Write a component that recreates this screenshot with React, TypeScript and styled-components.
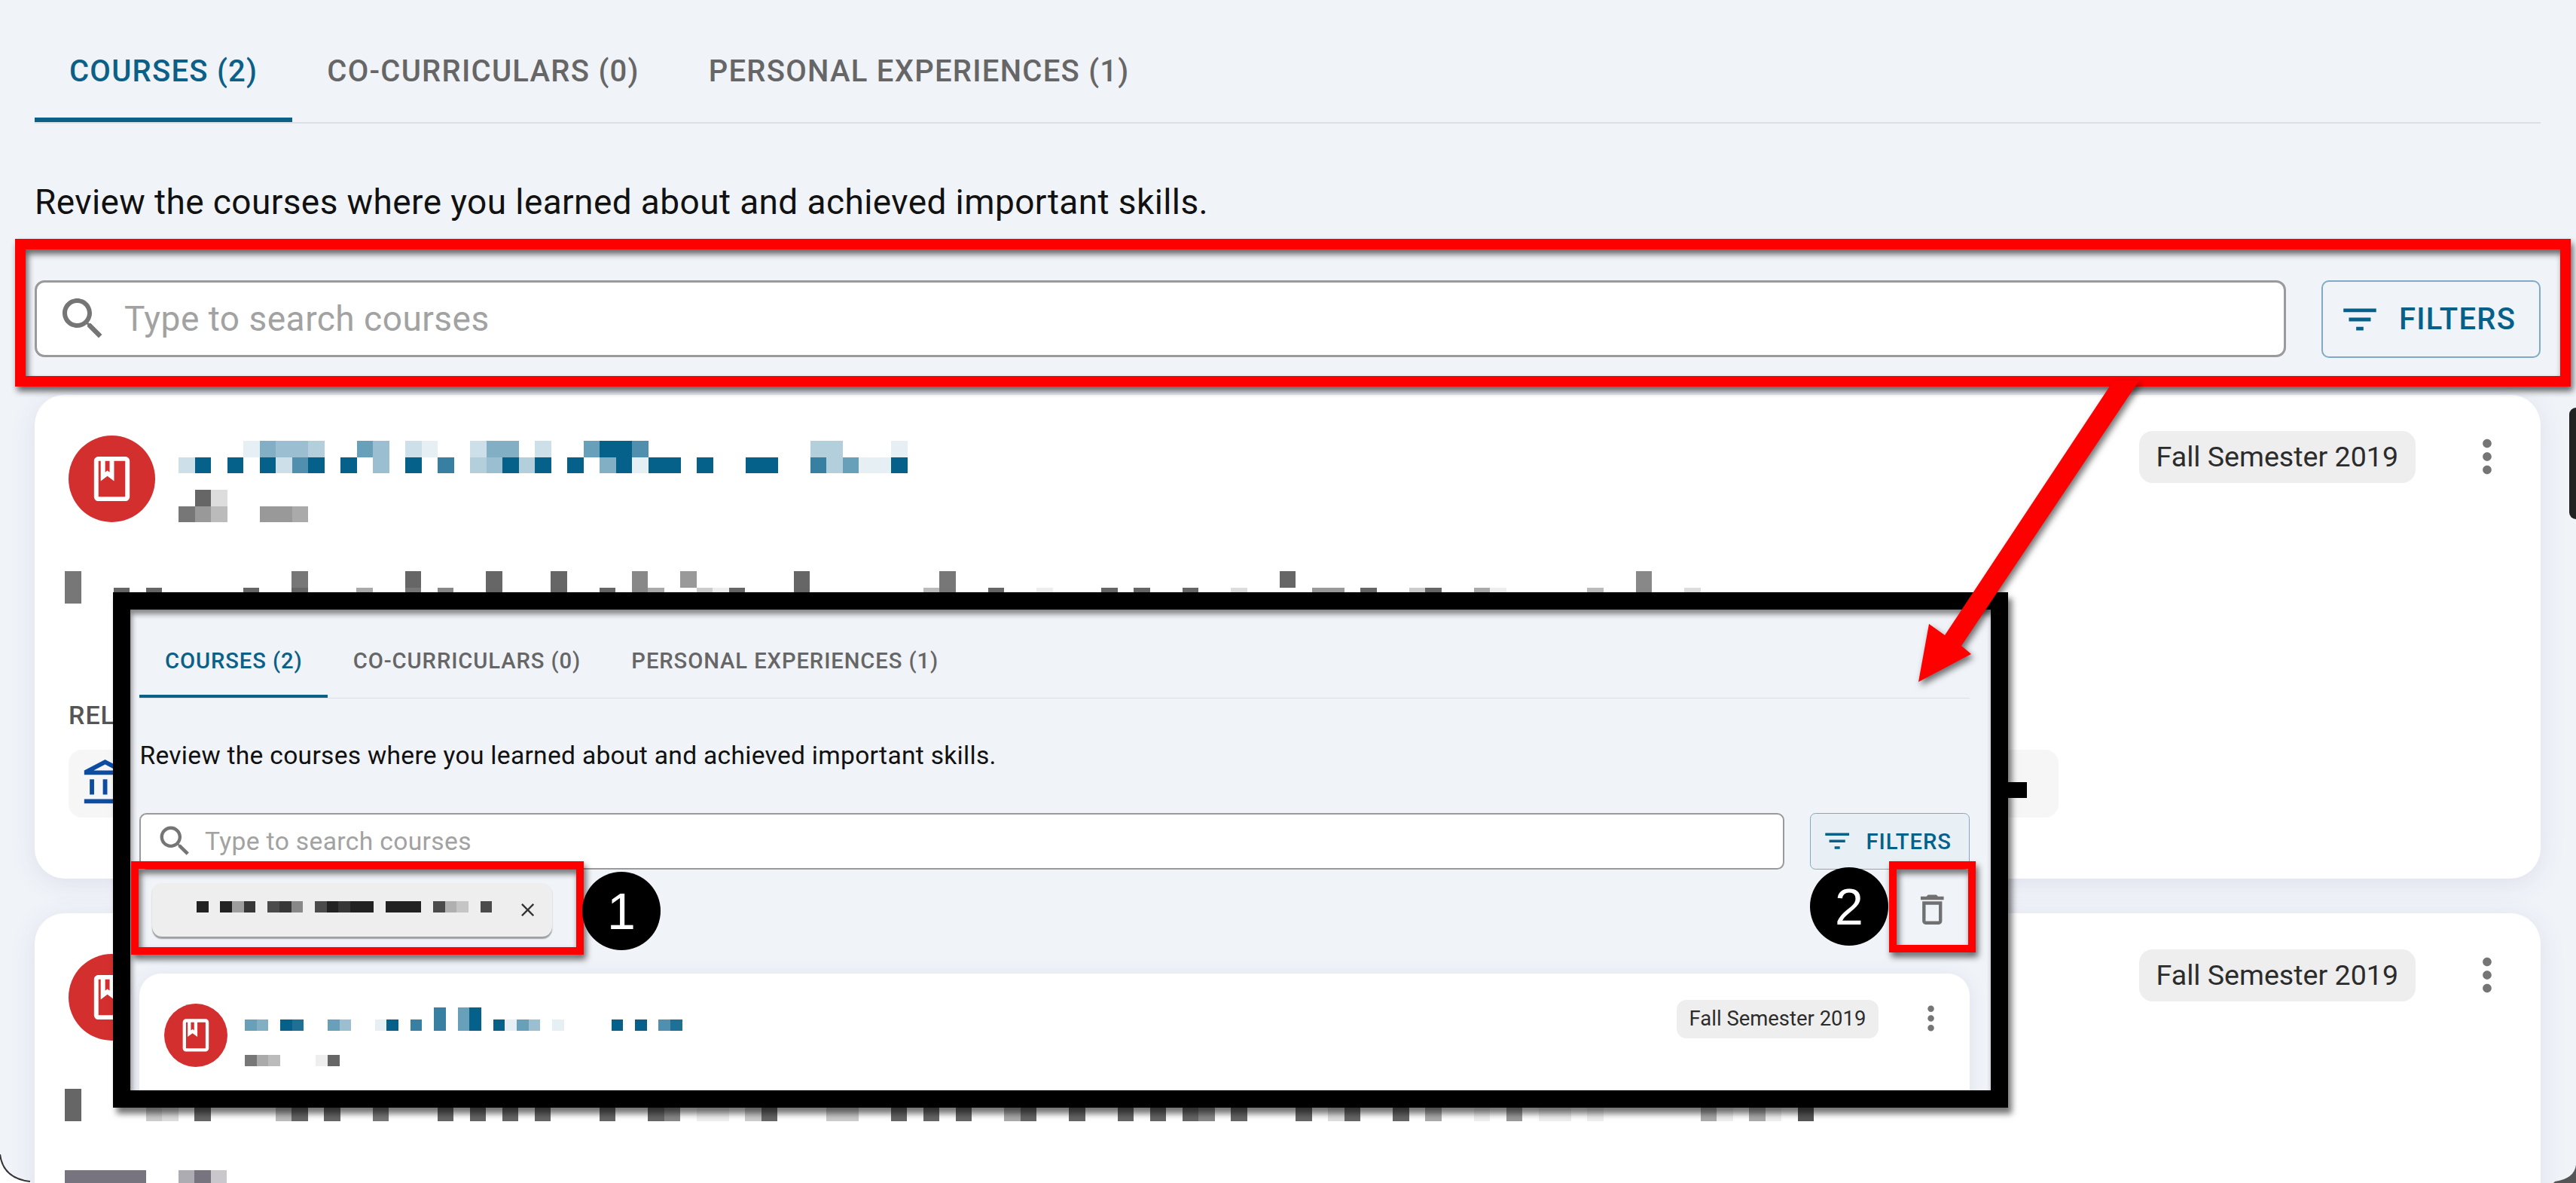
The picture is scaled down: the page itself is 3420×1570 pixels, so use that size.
import React, { FC, ReactNode } from "react";
import styled, { createGlobalStyle } from "styled-components";

const CELL = 21.5;
const BRAND = "#05608a";
const GREY = "#555555";

// rows are "column:level" pairs, level 1-9 is the opacity in tenths and f is solid
const Mosaic: FC<{ rows: string[]; color: string; cols: number }> = ({ rows, color, cols }) => (
	<svg width={cols * CELL} height={rows.length * CELL} style={{ display: "block" }} shapeRendering="crispEdges">
		{rows.map((row, y) =>
			row
				.split(" ")
				.filter(Boolean)
				.map((pair) => {
					const [col, level] = pair.split(":");
					return (
						<rect
							key={`${y}-${col}`}
							x={Number(col) * CELL}
							y={y * CELL}
							width={CELL}
							height={CELL}
							fill={color}
							opacity={level === "f" ? 1 : Number(level) / 10}
						/>
					);
				})
		)}
	</svg>
);

const SearchIcon = () => (
	<svg width="72" height="72" viewBox="0 0 24 24" fill="#757575">
		<path d="M15.5 14h-.79l-.28-.27C15.41 12.59 16 11.11 16 9.5 16 5.91 13.09 3 9.5 3S3 5.91 3 9.5 5.91 16 9.5 16c1.61 0 3.09-.59 4.23-1.57l.27.28v.79l5 4.99L20.49 19l-4.99-5zm-6 0C7.01 14 5 11.99 5 9.5S7.01 5 9.5 5 14 7.01 14 9.5 11.99 14 9.5 14z" />
	</svg>
);

const FilterIcon = () => (
	<svg width="58" height="58" viewBox="0 0 24 24" fill={BRAND}>
		<path d="M10 18h4v-2h-4v2zM3 6v2h18V6H3zm3 7h12v-2H6v2z" />
	</svg>
);

const MoreIcon = () => (
	<MoreButton>
		<svg width="70" height="70" viewBox="0 0 24 24" fill="#757575">
			<path d="M12 8c1.1 0 2-.9 2-2s-.9-2-2-2-2 .9-2 2 .9 2 2 2zm0 2c-1.1 0-2 .9-2 2s.9 2 2 2 2-.9 2-2-.9-2-2-2zm0 6c-1.1 0-2 .9-2 2s.9 2 2 2 2-.9 2-2-.9-2-2-2z" />
		</svg>
	</MoreButton>
);

const BookIcon = () => (
	<svg width="71" height="71" viewBox="0 0 24 24" fill="#fff">
		<path d="M18 2H6c-1.1 0-2 .9-2 2v16c0 1.1.9 2 2 2h12c1.1 0 2-.9 2-2V4c0-1.1-.9-2-2-2zM9 4h2v5l-1-.75L9 9V4zm9 16H6V4h1v9l3-2.25L13 13V4h5v16z" />
	</svg>
);

const BankIcon = () => (
	<svg width="70" height="70" viewBox="0 0 24 24" fill="#0c4da2">
		<path d="M6.5 10h-2v7h2v-7zm6 0h-2v7h2v-7zm8.5 9H2v2h19v-2zm-2.5-9h-2v7h2v-7zm-7-6.74L16.71 6H6.29l5.21-2.74m0-2.26L2 6v2h19V6l-9.5-5z" />
	</svg>
);

const TrashIcon = () => (
	<svg width="72" height="72" viewBox="0 0 24 24" fill="#707070">
		<path d="M6 19c0 1.1.9 2 2 2h8c1.1 0 2-.9 2-2V7H6v12zM8 9h8v10H8V9zm7.5-5l-1-1h-5l-1 1H5v2h14V4z" />
	</svg>
);

const CloseIcon = () => (
	<svg width="40" height="40" viewBox="0 0 24 24" fill="#333">
		<path d="M19 6.41 17.59 5 12 10.59 6.41 5 5 6.41 10.59 12 5 17.59 6.41 19 12 13.41 17.59 19 19 17.59 13.41 12z" />
	</svg>
);

const Toolbar: FC<{ $tinted?: boolean }> = ({ $tinted }) => (
	<SearchRow>
		<SearchField>
			<SearchIcon />
			<SearchInput placeholder="Type to search courses" readOnly />
		</SearchField>
		<FilterButton $tinted={$tinted}>
			<FilterIcon />
			FILTERS
		</FilterButton>
	</SearchRow>
);

const TabBar = () => (
	<Tabs>
		<Tab $active>COURSES (2)</Tab>
		<Tab>CO-CURRICULARS (0)</Tab>
		<Tab>PERSONAL EXPERIENCES (1)</Tab>
	</Tabs>
);

const CourseCard: FC<{ title: string[]; sub: string[]; children?: ReactNode }> = ({ title, sub, children }) => (
	<Card>
		<CardHeader>
			<Avatar>
				<BookIcon />
			</Avatar>
			<TitleBlock>
				<Mosaic rows={title} color={BRAND} cols={46} />
				<SubTitle>
					<Mosaic rows={sub} color={GREY} cols={10} />
				</SubTitle>
			</TitleBlock>
			<Term>Fall Semester 2019</Term>
			<MoreIcon />
		</CardHeader>
		{children}
	</Card>
);

const App = () => (
	<Page>
		<GlobalStyle />
		<Main>
			<TabBar />
			<Intro>Review the courses where you learned about and achieved important skills.</Intro>
			<Toolbar />
			<CardList $top={49}>
				<CourseCard
					title={[
						"4:1 5:5 6:4 7:4 8:3 11:6 12:4 14:2 15:1 18:2 19:5 20:5 22:2 25:6 26:f 27:f 28:7 39:3 40:3 44:1",
						"0:2 1:f 3:f 5:f 6:2 7:7 8:f 10:f 12:4 14:f 16:8 18:3 19:4 20:f 21:3 22:f 24:f 26:5 27:f 28:1 29:f 30:f 32:f 35:f 36:f 39:8 40:3 41:6 42:1 43:1 44:f",
					]}
					sub={["1:9 2:2", "0:8 1:6 2:4 5:6 6:6 7:5"]}
				>
					<BodyText>
						<Mosaic
							color={GREY}
							cols={102}
							rows={[
								"0:8 14:8 21:9 26:9 30:9 35:7 38:6 45:9 54:8 75:9 97:7",
								"0:8 3:9 5:9 11:9 14:9 18:5 21:8 23:7 26:9 30:9 33:9 35:7 36:5 39:3 40:1 41:9 45:9 53:4 54:8 57:9 60:1 64:9 66:9 69:9 72:2 77:6 78:6 80:9 83:3 84:9 87:5 88:1 94:4 97:7 100:2",
							]}
						/>
					</BodyText>
					<SectionLabel>REL</SectionLabel>
					<RelatedPanel>
						<BankIcon />
						<RelatedMark />
					</RelatedPanel>
				</CourseCard>
				<CourseCard title={[]} sub={[]}>
					<BodyText>
						<Mosaic
							color={GREY}
							cols={108}
							rows={[
								"0:9",
								"0:9 5:3 6:2 8:9 13:4 14:9 16:9 19:8 23:9 25:9 27:9 29:9 33:9 36:9 37:7 39:1 40:1 42:3 43:9 47:3 48:3 51:9 53:9 55:9 58:5 59:9 62:9 65:9 67:9 69:9 70:7 72:9 76:9 78:2 79:9 82:9 84:5 87:1 89:6 91:1 92:1 94:1 101:5 102:1 104:5 105:1 107:f",
							]}
						/>
					</BodyText>
					<BodyText>
						<Mosaic rows={["0:f 1:f 2:f 3:f 4:f 7:6 8:f 9:4"]} color="#777480" cols={10} />
					</BodyText>
				</CourseCard>
			</CardList>
		</Main>

		<InsetFrame>
			<InsetBody>
				<TabBar />
				<Intro>Review the courses where you learned about and achieved important skills.</Intro>
				<Toolbar $tinted />
				<ChipRow>
					<FilterChip>
						<ChipLabel>
							<Mosaic rows={["0:f 2:f 3:4 4:9 6:8 7:9 8:5 10:8 11:f 12:9 13:f 14:f 16:f 17:f 18:f 20:8 21:3 22:2 24:8"]} color="#222" cols={25} />
						</ChipLabel>
						<CloseIcon />
					</FilterChip>
					<TrashIcon />
				</ChipRow>
				<CardList $top={68}>
					<CourseCard
						title={[
							"16:8 18:6 19:f",
							"0:6 1:5 3:f 4:9 7:6 8:4 11:1 12:f 14:8 16:8 18:6 19:f 21:f 22:1 23:6 24:4 26:1 31:f 33:f 35:7 36:9",
						]}
						sub={["", "0:8 1:5 2:4 6:1 7:9"]}
					/>
				</CardList>
			</InsetBody>
		</InsetFrame>

		<Callout $x={20} $y={317} $w={3393} $h={196} $edge={14} />
		<Callout $x={174} $y={1143} $w={601} $h={124} $edge={10} />
		<Callout $x={2508} $y={1143} $w={115} $h={121} $edge={10} />
		<NumberBadge $x={773} $y={1157}>1</NumberBadge>
		<NumberBadge $x={2403} $y={1151}>2</NumberBadge>

		<ArrowSvg width="320" height="420" viewBox="2530 500 320 420">
			<polygon points="2806,505 2840,505 2604,857 2617,868 2547,905 2561,828 2582,843" fill="#ff0000" />
		</ArrowSvg>

		<DeviceEdge />
		<CornerSvg $side="left" width="42" height="38" viewBox="0 0 42 38">
			<path d="M0 0 Q4 32 40 36 L42 38 L0 38 Z" fill="#fff" />
			<path d="M0 0 Q4 32 40 36" fill="none" stroke="#333" strokeWidth="2" />
		</CornerSvg>
		<CornerSvg $side="right" width="30" height="24" viewBox="0 0 30 24">
			<path d="M30 0 Q28 18 2 22 L0 24 L30 24 Z" fill="#555" />
		</CornerSvg>
	</Page>
);

export default App;

const GlobalStyle = createGlobalStyle`
	html, body {
		margin: 0;
		padding: 0;
		background: #f0f3f8;
	}
	* {
		box-sizing: border-box;
	}
`;

const Page = styled.div`
	position: relative;
	width: 3420px;
	height: 1570px;
	overflow: hidden;
	background: #f0f3f8;
	font-family: Roboto, "Liberation Sans", sans-serif;
`;

const Main = styled.div`
	padding: 7px 47px 0 46px;
`;

const Tabs = styled.div`
	display: flex;
	height: 157px;
	border-bottom: 2px solid #dcdfe3;
`;

const Tab = styled.div<{ $active?: boolean }>`
	padding: 66px 46px 0;
	font-size: 40px;
	font-weight: 500;
	line-height: 44px;
	letter-spacing: 1.25px;
	white-space: nowrap;
	color: ${(p) => (p.$active ? "#0b6087" : "#666")};
	border-bottom: 6px solid ${(p) => (p.$active ? "#0b6087" : "transparent")};
`;

const Intro = styled.p`
	margin: 76px 0;
	font-size: 46px;
	line-height: 56px;
	letter-spacing: 0.4px;
	color: #111;
`;

const SearchRow = styled.div`
	display: flex;
	gap: 47px;
	height: 103px;
`;

const SearchField = styled.div`
	flex: 1;
	display: flex;
	align-items: center;
	gap: 19px;
	height: 102px;
	padding-left: 25px;
	background: #fff;
	border: 3px solid #9a9a9a;
	border-radius: 13px;
`;

const SearchInput = styled.input`
	flex: 1;
	border: 0;
	outline: 0;
	padding: 0;
	background: transparent;
	font-family: inherit;
	font-size: 46px;
	letter-spacing: 0.5px;

	&::placeholder {
		color: #a2a2a2;
		opacity: 1;
	}
`;

const FilterButton = styled.div<{ $tinted?: boolean }>`
	display: flex;
	align-items: center;
	gap: 23px;
	width: 291px;
	padding-left: 20px;
	font-size: 40px;
	font-weight: 500;
	letter-spacing: 1.25px;
	color: ${BRAND};
	background: ${(p) => (p.$tinted ? "#e8f0f6" : "transparent")};
	border: 2px solid #7fa9c4;
	border-radius: 10px;
`;

const CardList = styled.div<{ $top: number }>`
	display: flex;
	flex-direction: column;
	gap: 46px;
	margin-top: ${(p) => p.$top}px;
`;

const Card = styled.div`
	padding: 54px 36px 81px 45px;
	background: #fff;
	border-radius: 40px;
	box-shadow: 0 6px 34px rgba(70, 70, 130, 0.1);
`;

const CardHeader = styled.div`
	display: flex;
	align-items: flex-start;
	height: 115px;
`;

const Avatar = styled.div`
	flex: none;
	display: grid;
	place-items: center;
	width: 115px;
	height: 115px;
	margin-right: 31px;
	background: #d32f2f;
	border-radius: 50%;
`;

const TitleBlock = styled.div`
	flex: 1;
	padding-top: 7px;
`;

const SubTitle = styled.div`
	margin-top: 22px;
`;

const Term = styled.div`
	flex: none;
	height: 69px;
	margin: -6px 60px 0 0;
	padding: 0 23px;
	font-size: 37.6px;
	line-height: 69px;
	color: #2c2c2c;
	background: #eeeeee;
	border-radius: 18px;
`;

const MoreButton = styled.div`
	flex: none;
	height: 70px;
	margin-top: -7px;
`;

const BodyText = styled.div`
	margin: 64.5px 0 0 -5px;
`;

const SectionLabel = styled.div`
	margin-top: 128px;
	font-size: 34px;
	font-weight: 500;
	line-height: 40px;
	letter-spacing: 1px;
	color: #555;
`;

const RelatedPanel = styled.div`
	display: flex;
	align-items: center;
	justify-content: space-between;
	width: 2642px;
	height: 90px;
	margin-top: 26px;
	padding: 0 42px 0 15px;
	background: #f6f6f6;
	border-radius: 18px;
`;

const RelatedMark = styled.div`
	width: 60px;
	height: 21px;
	margin-top: 18px;
	background: #000;
`;

const InsetFrame = styled.div`
	position: absolute;
	left: 150px;
	top: 786px;
	width: 2516px;
	height: 684px;
	overflow: hidden;
	background: #f0f3f8;
	border: 23px solid #000;
	box-shadow:
		5px 8px 8px rgba(0, 0, 0, 0.55),
		inset 2px 6px 7px rgba(0, 0, 0, 0.45);
`;

const InsetBody = styled.div`
	zoom: 0.73;
	padding: 5px 38px 0 17px;
`;

const ChipRow = styled.div`
	display: flex;
	align-items: center;
	justify-content: space-between;
	height: 97px;
	margin-top: 24px;
	padding: 0 32px 0 23px;
`;

const FilterChip = styled.div`
	display: flex;
	align-items: center;
	justify-content: space-between;
	width: 727px;
	height: 97px;
	padding: 0 24px 0 80px;
	background: #eeeeee;
	border-radius: 18px;
	box-shadow: 0 3px 2px rgba(0, 0, 0, 0.35);
`;

const ChipLabel = styled.div`
	margin-bottom: 10px;
`;

const Callout = styled.div<{ $x: number; $y: number; $w: number; $h: number; $edge: number }>`
	position: absolute;
	left: ${(p) => p.$x}px;
	top: ${(p) => p.$y}px;
	width: ${(p) => p.$w}px;
	height: ${(p) => p.$h}px;
	border: ${(p) => p.$edge}px solid #ff0000;
	filter: drop-shadow(3px 6px 4px rgba(0, 0, 0, 0.6));
`;

const NumberBadge = styled.div<{ $x: number; $y: number }>`
	position: absolute;
	left: ${(p) => p.$x}px;
	top: ${(p) => p.$y}px;
	width: 104px;
	height: 104px;
	font-family: "Liberation Sans", Arial, sans-serif;
	font-size: 68px;
	line-height: 104px;
	text-align: center;
	color: #fff;
	background: #000;
	border-radius: 50%;
`;

const ArrowSvg = styled.svg`
	position: absolute;
	left: 2530px;
	top: 500px;
	overflow: visible;
	filter: drop-shadow(3px 5px 4px rgba(0, 0, 0, 0.55));
`;

const DeviceEdge = styled.div`
	position: absolute;
	right: 0;
	top: 541px;
	width: 9px;
	height: 148px;
	background: #222;
	border-radius: 9px 0 0 9px;
`;

const CornerSvg = styled.svg<{ $side: "left" | "right" }>`
	position: absolute;
	bottom: 0;
	${(p) => p.$side}: 0;
`;
